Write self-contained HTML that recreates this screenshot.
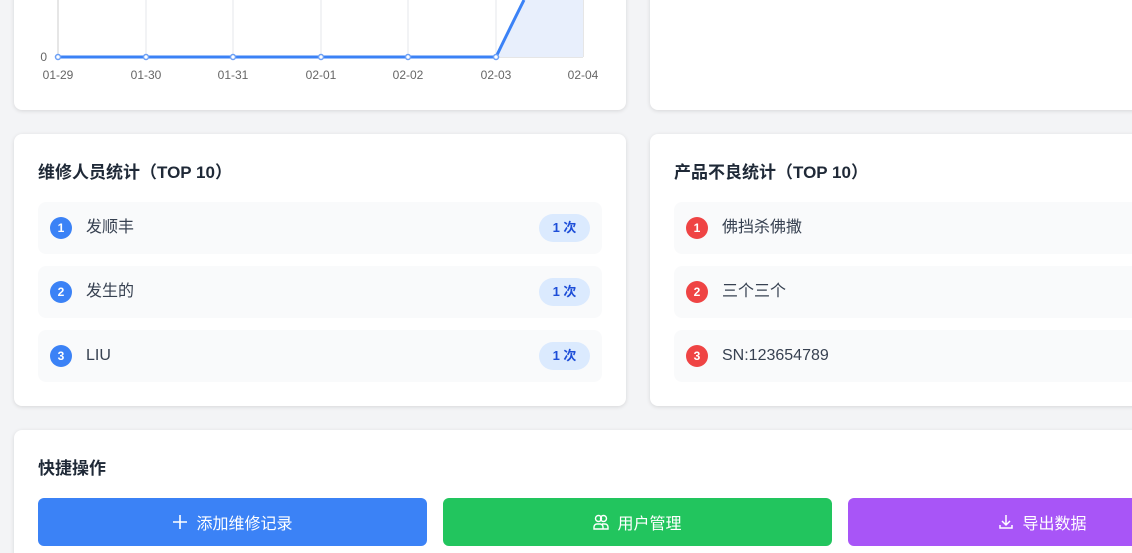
<!DOCTYPE html>
<html style="width:1132px;height:553px;overflow:hidden"><head><meta charset="utf-8"><style>
*{box-sizing:border-box;margin:0;padding:0}
body{width:1132px;height:553px;overflow:hidden;background:#f3f4f6;font-family:"Liberation Sans","Noto Sans CJK SC",sans-serif;position:relative;color:#1f2937}
.card{position:absolute;background:#fff;border-radius:8px;box-shadow:0 1px 4px rgba(0,0,0,.12)}
h3{position:absolute;left:24px;font-size:17px;font-weight:700;color:#1f2937}
.row{position:absolute;left:24px;width:564px;height:52px;background:#f9fafb;border-radius:8px}
.num{position:absolute;left:12px;top:15px;width:22px;height:22px;border-radius:50%;color:#fff;font-size:12px;font-weight:700;text-align:center;line-height:22px}
.name{position:absolute;left:48px;top:15px;font-size:16px;color:#374151;line-height:22px}
.badge{position:absolute;right:12px;top:12px;width:51px;height:28px;border-radius:14px;background:#dbeafe;color:#1d4ed8;font-size:13px;font-weight:700;text-align:center;line-height:28px}
.btn{position:absolute;top:498px;height:48px;width:389px;border-radius:6px;color:#fff;font-size:16px;display:flex;align-items:center;justify-content:center;gap:8px}
</style></head><body>
<div class="card" style="left:14px;top:-20px;width:612px;height:130px">
<svg width="612" height="130" style="position:absolute;left:0;top:0" font-family="Liberation Sans" font-size="12" fill="#666">
<g stroke="#e5e7eb" stroke-width="1">
<line x1="132" y1="0" x2="132" y2="77"/><line x1="219" y1="0" x2="219" y2="77"/><line x1="307" y1="0" x2="307" y2="77"/><line x1="394" y1="0" x2="394" y2="77"/><line x1="482" y1="0" x2="482" y2="77"/>
</g>
<line x1="44" y1="0" x2="44" y2="77" stroke="#ccc"/>
<line x1="569" y1="0" x2="569" y2="77" stroke="#ccc"/>
<line x1="44" y1="77" x2="569" y2="77" stroke="#ccc"/>
<path d="M482 77 Q495 50 510 20 L569 20 L569 77Z" fill="#e8effc"/>
<path d="M44 77 L482 77 Q495 50 510 20" stroke="#3b82f6" stroke-width="3" fill="none"/>
<g fill="#fff" stroke="#6b9ff5" stroke-width="1.5">
<circle cx="44" cy="77" r="2.5"/><circle cx="132" cy="77" r="2.5"/><circle cx="219" cy="77" r="2.5"/><circle cx="307" cy="77" r="2.5"/><circle cx="394" cy="77" r="2.5"/><circle cx="482" cy="77" r="2.5"/>
</g>
<text x="33" y="81" text-anchor="end">0</text>
<g text-anchor="middle"><text x="44" y="99">01-29</text><text x="132" y="99">01-30</text><text x="219" y="99">01-31</text><text x="307" y="99">02-01</text><text x="394" y="99">02-02</text><text x="482" y="99">02-03</text><text x="569" y="99">02-04</text></g>
</svg></div>
<div class="card" style="left:650px;top:-20px;width:500px;height:130px"></div>

<div class="card" style="left:14px;top:134px;width:612px;height:272px">
<h3 style="top:24px">维修人员统计（TOP 10）</h3>
<div class="row" style="top:68px"><div class="num" style="background:#3b82f6">1</div><div class="name">发顺丰</div><div class="badge">1 次</div></div>
<div class="row" style="top:132px"><div class="num" style="background:#3b82f6">2</div><div class="name">发生的</div><div class="badge">1 次</div></div>
<div class="row" style="top:196px"><div class="num" style="background:#3b82f6">3</div><div class="name">LIU</div><div class="badge">1 次</div></div>
</div>
<div class="card" style="left:650px;top:134px;width:500px;height:272px">
<h3 style="top:24px">产品不良统计（TOP 10）</h3>
<div class="row" style="top:68px"><div class="num" style="background:#ef4444">1</div><div class="name">佛挡杀佛撒</div></div>
<div class="row" style="top:132px"><div class="num" style="background:#ef4444">2</div><div class="name">三个三个</div></div>
<div class="row" style="top:196px"><div class="num" style="background:#ef4444">3</div><div class="name">SN:123654789</div></div>
</div>

<div class="card" style="left:14px;top:430px;width:1140px;height:140px">
<h3 style="top:24px">快捷操作</h3></div>
<div class="btn" style="left:38px;background:#3b82f6"><svg width="16" height="16" viewBox="0 0 16 16"><path d="M8 1v14M1 8h14" stroke="#fff" stroke-width="1.6"/></svg>添加维修记录</div>
<div class="btn" style="left:443px;background:#22c55e"><svg width="16" height="16" viewBox="0 0 16 16" fill="none" stroke="#fff" stroke-width="1.4"><circle cx="5.5" cy="4.5" r="3"/><circle cx="10.5" cy="4.5" r="3"/><path d="M1 15v-2a3 3 0 013-3h3a3 3 0 013 3v2zM9 10h3a3 3 0 013 3v2h-5"/></svg>用户管理</div>
<div class="btn" style="left:848px;background:#a855f7"><svg width="16" height="16" viewBox="0 0 16 16" fill="none" stroke="#fff" stroke-width="1.5"><path d="M8 1v10M4 7l4 4 4-4M2 11v3h12v-3"/></svg>导出数据</div>
</body></html>
